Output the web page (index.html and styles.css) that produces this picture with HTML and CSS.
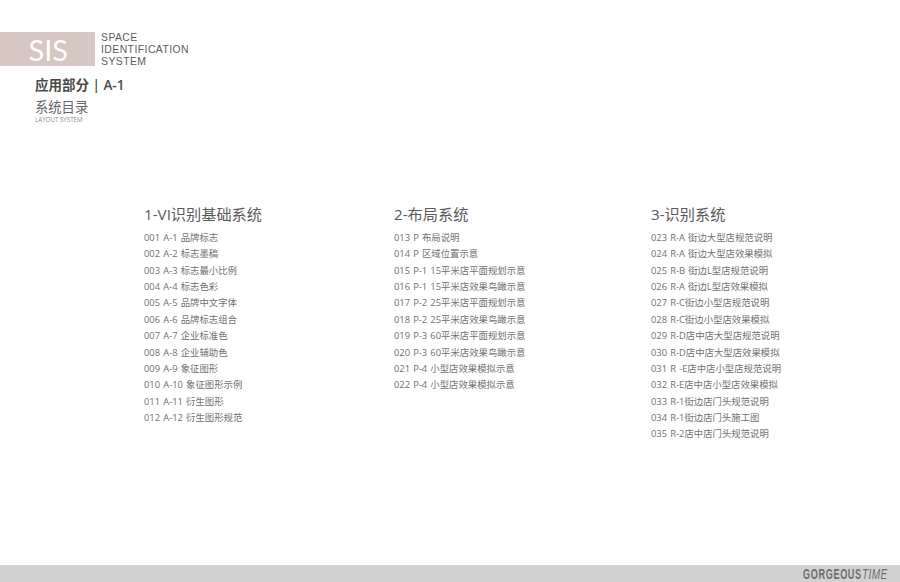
FILE: index.html
```html
<!DOCTYPE html>
<html lang="zh">
<head>
<meta charset="utf-8">
<title>SIS</title>
<link rel="stylesheet" href="styles.css">
</head>
<body>
<div class="page">
  <header class="header">
    <div class="brand">
      <div class="brand-tag">SIS</div>
      <div class="brand-name">SPACE<br>IDENTIFICATION<br>SYSTEM</div>
    </div>
    <div class="titles">
      <div class="title-main">应用部分 | A-1</div>
      <div class="title-sub">系统目录</div>
      <div class="title-en">LAYOUT SYSTEM</div>
    </div>
  </header>
  <main class="columns">
    <section class="col col-1">
      <h2>1-VI识别基础系统</h2>
      <ul>
        <li>001 A-1 品牌标志</li>
        <li>002 A-2 标志墨稿</li>
        <li>003 A-3 标志最小比例</li>
        <li>004 A-4 标志色彩</li>
        <li>005 A-5 品牌中文字体</li>
        <li>006 A-6 品牌标志组合</li>
        <li>007 A-7 企业标准色</li>
        <li>008 A-8 企业辅助色</li>
        <li>009 A-9 象征图形</li>
        <li>010 A-10 象征图形示例</li>
        <li>011 A-11 衍生图形</li>
        <li>012 A-12 衍生图形规范</li>
      </ul>
    </section>
    <section class="col col-2">
      <h2>2-布局系统</h2>
      <ul>
        <li>013 P 布局说明</li>
        <li>014 P 区域位置示意</li>
        <li>015 P-1 15平米店平面规划示意</li>
        <li>016 P-1 15平米店效果鸟瞰示意</li>
        <li>017 P-2 25平米店平面规划示意</li>
        <li>018 P-2 25平米店效果鸟瞰示意</li>
        <li>019 P-3 60平米店平面规划示意</li>
        <li>020 P-3 60平米店效果鸟瞰示意</li>
        <li>021 P-4 小型店效果模拟示意</li>
        <li>022 P-4 小型店效果模拟示意</li>
      </ul>
    </section>
    <section class="col col-3">
      <h2>3-识别系统</h2>
      <ul>
        <li>023 R-A 街边大型店规范说明</li>
        <li>024 R-A 街边大型店效果模拟</li>
        <li>025 R-B 街边L型店规范说明</li>
        <li>026 R-A 街边L型店效果模拟</li>
        <li>027 R-C街边小型店规范说明</li>
        <li>028 R-C街边小型店效果模拟</li>
        <li>029 R-D店中店大型店规范说明</li>
        <li>030 R-D店中店大型店效果模拟</li>
        <li>031 R -E店中店小型店规范说明</li>
        <li>032 R-E店中店小型店效果模拟</li>
        <li>033 R-1街边店门头规范说明</li>
        <li>034 R-1街边店门头施工图</li>
        <li>035 R-2店中店门头规范说明</li>
      </ul>
    </section>
  </main>
  <footer class="footer">
    <span class="footer-brand">GORGEOUS</span><span class="footer-time">TIME</span>
  </footer>
</div>
</body>
</html>
```

FILE: styles.css
```css
* { box-sizing: border-box; }
html, body { margin: 0; padding: 0; background: #fff; }
body { font-family: "Open Sans", "Noto Sans CJK SC", sans-serif; color: #666; }
.page { width: 900px; height: 582px; display: flex; flex-direction: column; overflow: hidden; }
.header { padding-top: 32px; height: 206px; flex: none; }
.brand { display: flex; align-items: center; gap: 6px; height: 34px; }
.brand-tag { width: 95px; height: 34px; background: #d6c7c3; color: #fff; font-family: "Lato", sans-serif; font-size: 29px; line-height: 35px; text-align: right; padding-right: 27px; }
.brand-name { font-family: "Liberation Sans", sans-serif; font-size: 10.4px; line-height: 12px; color: #5c5c5c; letter-spacing: 0.45px; padding-top: 1px; }
.titles { padding-left: 35px; padding-top: 10px; }
.title-main { font-size: 13.5px; line-height: 18px; font-weight: 600; color: #4a4a4a; }
.title-sub { font-size: 13.3px; line-height: 18px; margin-top: 4px; color: #666; }
.title-en { font-size: 6.2px; line-height: 8px; color: #888; }
.columns { flex: 1; display: flex; }
.col { flex: none; }
.col-1 { margin-left: 144px; width: 250px; }
.col-2 { width: 257px; }
.col-3 { width: 249px; }
h2 { margin: 0 0 8px; font-size: 15.2px; line-height: 16px; font-weight: 400; color: #5a5a5a; }
ul { list-style: none; margin: 0; padding: 0; }
li { font-size: 9.4px; word-spacing: 0.7px; line-height: 16.36px; height: 16.36px; color: #707070; white-space: nowrap; }
.footer { flex: none; height: 17px; background: #d2d2d2; display: flex; padding-left: 803px; gap: 2px; color: #6e6e6e; font-family: "Liberation Sans", sans-serif; font-size: 14px; line-height: 18px; }
.footer-brand { width: 57px; font-weight: 700; letter-spacing: 1px; white-space: nowrap; transform: scaleX(0.65); transform-origin: left center; }
.footer-time { width: 25px; font-style: italic; letter-spacing: 0.5px; white-space: nowrap; transform: scaleX(0.72); transform-origin: left center; }
```
